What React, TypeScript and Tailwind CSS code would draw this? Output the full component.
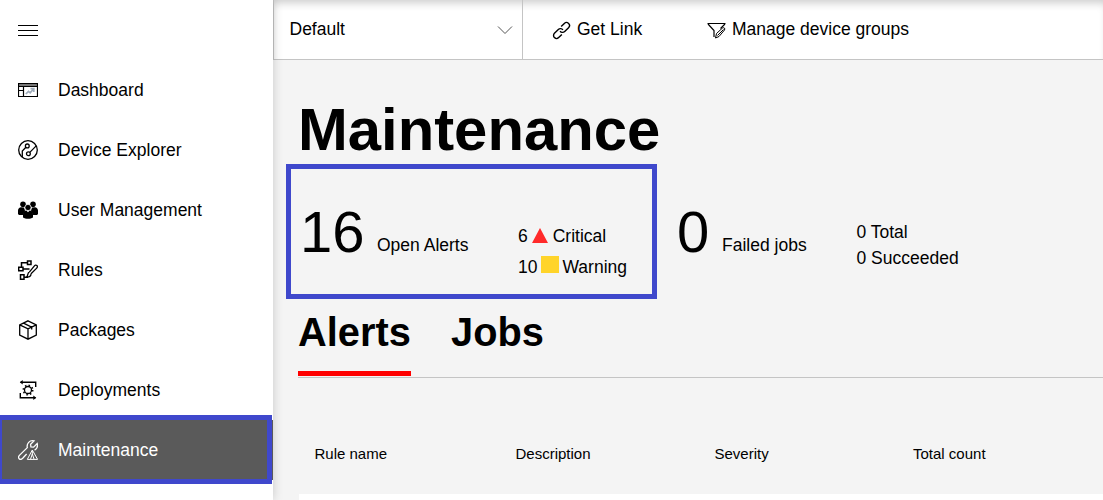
import type { ReactNode } from "react";

function Icon({ children }: { children: ReactNode }) {
  return (
    <svg width="20" height="20" viewBox="0 0 20 20" fill="none" stroke="currentColor" strokeWidth="1.3" className="shrink-0">
      {children}
    </svg>
  );
}

const icons: Record<string, ReactNode> = {
  dashboard: (
    <Icon>
      <path d="M0 3h20v4H0z" fill="#777" stroke="none" />
      <path d="M.5 3.500h19v13H.5zM0 6.500h20M5.500 7v10M0 10.500h5" strokeWidth="1.200" />
      <path d="M7.800 14l2.700-2.700 1.700 1.500 3-3.500M12.500 8.700h3.300V12" stroke="#9eabba" strokeWidth="1.700" />
    </Icon>
  ),
  explorer: (
    <Icon>
      <circle cx="10" cy="10" r="9.300" />
      <circle cx="9.300" cy="5.900" r="1.900" />
      <circle cx="10.400" cy="13.700" r="1.900" />
      <path d="M7.900 7.200L4.300 11V17M11.800 12.400l6.400-6.500" />
    </Icon>
  ),
  users: (
    <Icon>
      <g fill="currentColor" stroke="none">
        <circle cx="5" cy="4.200" r="2.800" />
        <circle cx="15" cy="4.200" r="2.800" />
        <path d="M0 14v-3.500C0 8.700 1.500 7.500 3 7.300l3 .2 1 3L4.800 15H1zM20 14v-3.500C20 8.700 18.500 7.500 17 7.300l-3 .2-1 3 2.200 4.500H19z" />
        <path d="M5 17.500V14c0-2.300 1.800-3.400 3.300-3.400L10 12.300l1.700-1.700c1.500 0 3.300 1.100 3.300 3.400v3.500c-2.500 1.700-7.500 1.700-10 0z" />
      </g>
      <circle cx="10" cy="7.500" r="3.100" fill="currentColor" stroke="white" strokeWidth=".7" />
    </Icon>
  ),
  rules: (
    <Icon>
      <path d="M9.500 1h3.500v3.500H9.500zM.7 7.200H5v3.500H.7zM2.500 14.800H6v4.400H2.500zM3.500 7V2.800h6M5 9h6.500M6 17.200h4" strokeWidth="1.500" />
      <path d="M11.300 12.200L16 6.300c1-1.200 2.100-1.400 2.900-.7s.6 1.800-.4 2.800L13 13.700M11.300 12.200c-1.800.2-1.100 3.200-2.600 4.800 2.500.2 4.500-.8 4.300-3.300" />
    </Icon>
  ),
  packages: (
    <Icon>
      <path d="M10 .8l8.300 4v10.400L10 19.200l-8.300-4V4.800zM1.700 4.800L10 8.900l8.300-4.100M10 8.900v10.300M5.500 3.100l8.200 4.100V9.500" />
    </Icon>
  ),
  deployments: (
    <Icon>
      <path d="M17.700 7V2.300H2.500M2.300 13v4.700h15.200" strokeWidth="1.400" />
      <path d="M4.700 0v4.600L1.800 2.300zM15.300 15.400V20l3-2.300z" fill="currentColor" stroke="none" />
      <circle cx="10" cy="10" r="3.500" />
      <circle cx="10" cy="10" r="4.700" strokeWidth="1.600" strokeDasharray="1.500 2.191" />
    </Icon>
  ),
  maintenance: (
    <Icon>
      <path d="M8.600 14l-3.900 4.300C3.500 19.500 1.900 19.500 1.100 18.700s-.8-2.200.3-3.300l7.900-7.800C8.400 3.600 11.600-.1 16 .9l-3.400 3.400.3 2.600 2.700.2L19.200 3.500c.8 3-.3 5.500-2.600 6.700" strokeWidth="1.300" />
      <path d="M14.300 10L9.300 19.400h10.300zM14.300 11v3.500M14.300 14l-1.700 5M14.300 14l1.700 5" strokeWidth="1" />
    </Icon>
  ),
};

const nav = [
  { icon: "dashboard", label: "Dashboard" },
  { icon: "explorer", label: "Device Explorer" },
  { icon: "users", label: "User Management" },
  { icon: "rules", label: "Rules" },
  { icon: "packages", label: "Packages" },
  { icon: "deployments", label: "Deployments" },
];

function Sidebar() {
  return (
    <nav className="relative z-10 flex w-[273px] shrink-0 flex-col bg-white shadow-[0_0_10px_rgba(0,0,0,0.18)]">
      <div className="flex h-15 items-center px-[18px]">
        <svg width="20" height="20" stroke="currentColor" strokeWidth="1">
          <path d="M0 5.500h20M0 10.500h20M0 15.500h20" />
        </svg>
      </div>
      {nav.map((n) => (
        <a key={n.label} className="flex h-15 items-center gap-5 pl-[18px]">
          {icons[n.icon]}
          <span>{n.label}</span>
        </a>
      ))}
      <a className="relative flex h-15 items-center gap-5 bg-[#5a5a5a] pl-[18px] text-white">
        {icons.maintenance}
        <span>Maintenance</span>
        <span className="absolute -top-[5px] -left-[3px] h-[69px] w-[275px] border-[5px] border-[#3f48cc]" />
      </a>
    </nav>
  );
}

function Toolbar() {
  return (
    <header className="flex h-15 shrink-0 border-b border-l border-[#c4c4c4] bg-white shadow-[inset_0_7px_8px_-4px_rgba(0,0,0,0.2)]">
      <div className="flex w-[249px] items-center justify-between border-r border-[#c4c4c4] pr-[9px] pl-[15.500px]">
        <span>Default</span>
        <svg width="16" height="10" fill="none" stroke="#555">
          <path d="M1 1.500l7 7 7-7" />
        </svg>
      </div>
      <div className="flex w-[156px] items-center gap-[5px] pl-[29px]">
        <svg width="20" height="20" viewBox="0 0 20 20" fill="none" stroke="currentColor" strokeWidth="1.400" className="shrink-0">
          <g transform="rotate(-45 9.500 10.500)">
            <path d="M7 13.500H2.500a3 3 0 0 1-3-3 3 3 0 0 1 3-3H8a3 3 0 0 1 2.900 3.600M12 7.500h4.500a3 3 0 0 1 3 3 3 3 0 0 1-3 3H11a3 3 0 0 1-2.900-3.600" />
          </g>
        </svg>
        <span className="whitespace-nowrap">Get Link</span>
      </div>
      <div className="flex items-center gap-[6px] pl-[28px]">
        <svg width="19" height="18" fill="none" stroke="currentColor" className="shrink-0">
          <path d="M.5 2.500h18M1 3l6 6.500V16M18 3l-4.500 4.500" strokeWidth="1.200" />
          <path d="M9.500 12.500l6-5.500c1.500-1 3 .5 2 2L12 15.500 8.500 17zM10.500 14.500l6-6" />
        </svg>
        <span>Manage device groups</span>
      </div>
    </header>
  );
}

function Stats() {
  return (
    <section className="flex h-[135px]">
      <div className="relative flex w-[378px]">
        <span className="absolute top-0 -left-3 h-[135px] w-[371px] border-[5px] border-[#3f48cc]" />
        <div className="w-[79px] pt-[35px] pl-[2px] text-[58px] leading-[66px]">16</div>
        <div className="w-[141px] pt-[71px] leading-[21px]">Open Alerts</div>
        <div className="pt-[57px]">
          <div className="flex h-[31px] items-center">
            6
            <svg width="16" height="15" className="relative -top-[1px] mr-[5px] ml-[4px]">
              <path d="M8 0l8 15H0z" fill="#ff2a2a" />
            </svg>
            Critical
          </div>
          <div className="flex h-[31px] items-center">
            10
            <span className="relative -top-[3px] mr-[3px] ml-[4px] h-[17px] w-[18px] bg-[#ffd42a]" />
            Warning
          </div>
        </div>
      </div>
      <div className="w-[46px] pt-[35px] pl-[1px] text-[58px] leading-[66px]">0</div>
      <div className="w-[134.500px] pt-[71px] leading-[21px]">Failed jobs</div>
      <div className="pt-[55px] leading-[26px]">
        <div>0 Total</div>
        <div>0 Succeeded</div>
      </div>
    </section>
  );
}

export default function App() {
  return (
    <div className="flex h-[500px] w-[1103px] overflow-hidden bg-[#f4f4f4] font-['Liberation_Sans',Arial,sans-serif] text-[17.500px] text-black">
      <Sidebar />
      <div className="flex min-w-0 grow flex-col">
        <Toolbar />
        <main className="flex grow flex-col pl-[25px]">
          <h1 className="h-[104px] pt-[35px] text-[59.800px] leading-[69px] font-bold">Maintenance</h1>
          <Stats />
          <div className="flex h-[79px] gap-10 border-b border-[#c4c4c4] text-[40px] leading-[46px] font-bold">
            <div className="h-[77px] w-[113px] border-b-[5px] border-[#ff0000] pt-[10px] text-[39.800px]">Alerts</div>
            <div className="pt-[10px] text-[39.800px]">Jobs</div>
          </div>
          <div className="flex h-[116px] shrink-0 pt-[67px] pl-[16.500px] text-[15px] leading-[18px]">
            <div className="w-[201px]">Rule name</div>
            <div className="w-[199px]">Description</div>
            <div className="w-[198.500px]">Severity</div>
            <div>Total count</div>
          </div>
          <div className="ml-[1px] grow bg-white" />
        </main>
      </div>
    </div>
  );
}
